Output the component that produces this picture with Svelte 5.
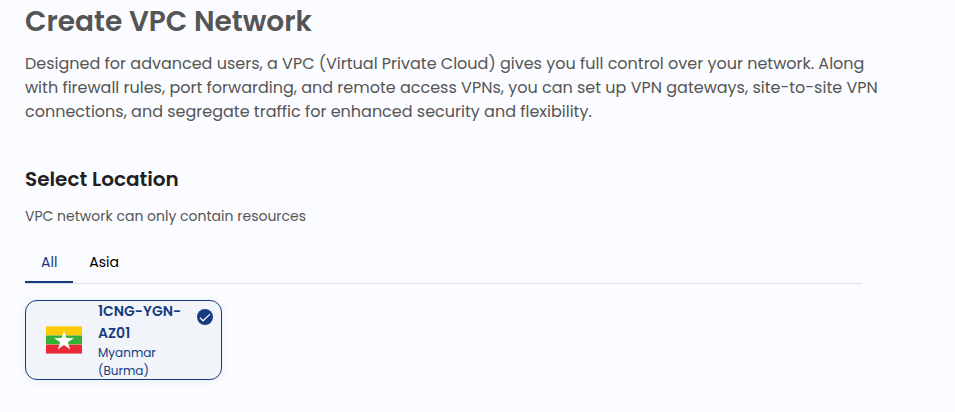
<script>
  const regions = ['All', 'Asia'];
  const locations = [
    { id: 'ygn-az01', name: '1CNG-YGN-AZ01', country: 'Myanmar (Burma)', region: 'Asia' }
  ];
  let region = $state('All');
  let selected = $state('ygn-az01');
  let shown = $derived(locations.filter((l) => region === 'All' || l.region === region));
</script>

<main>
  <h1>Create VPC Network</h1>
  <p class="intro">
    Designed for advanced users, a VPC (Virtual Private Cloud) gives you full control over your network. Along<br />
    with firewall rules, port forwarding, and remote access VPNs, you can set up VPN gateways, site-to-site VPN<br />
    connections, and segregate traffic for enhanced security and flexibility.
  </p>

  <section>
    <h2>Select Location</h2>
    <p class="hint">VPC network can only contain resources</p>

    <div class="tabs" role="tablist">
      {#each regions as r}
        <button
          type="button"
          role="tab"
          class="tab"
          class:active={region === r}
          aria-selected={region === r}
          onclick={() => (region = r)}>{r}</button>
      {/each}
    </div>

    <div class="cards">
      {#each shown as l (l.id)}
        <label class="card" class:selected={selected === l.id}>
          <input type="radio" name="location" value={l.id} bind:group={selected} />
          <svg class="flag" viewBox="0 0 36 28" aria-hidden="true">
            <rect y="0.5" width="36" height="27" fill="#d9cf9a" />
            <rect y="0.5" width="36" height="8.7" fill="#fecb00" />
            <rect y="9.6" width="36" height="8.6" fill="#34b233" />
            <rect y="18.7" width="36" height="8.8" fill="#ea2839" />
            <path
              fill="#fff"
              d="M18 4.6L20.4 11.9H28L21.8 16.3L24.2 23.6L18 19.1L11.8 23.6L14.2 16.3L8 11.9H15.6Z" />
          </svg>
          <span class="text">
            <span class="name">{l.name}</span>
            <span class="country">{l.country}</span>
          </span>
          {#if selected === l.id}
            <svg class="check" viewBox="0 0 16 16" aria-hidden="true">
              <circle cx="8" cy="8" r="8" fill="#173b80" />
              <path d="M3 8.8l3.1 3 6.9-6.7" fill="none" stroke="#fff" stroke-width="1.2" />
            </svg>
          {/if}
        </label>
      {/each}
    </div>
  </section>
</main>

<style>
  :global(body) {
    margin: 0;
    background: #fbfcff;
  }

  main {
    padding: 1px 93px 32px 25px;
    font-family: Poppins, Inter, sans-serif;
    color: #555;
  }

  h1,
  h2,
  p {
    margin: 0;
  }

  h1 {
    font-size: 28px;
    line-height: 42px;
    font-weight: 600;
  }

  .intro {
    margin-top: 9px;
    font-size: 16px;
    line-height: 24px;
    white-space: nowrap;
  }

  section {
    margin-top: 40px;
  }

  h2 {
    font-size: 20px;
    line-height: 30px;
    font-weight: 600;
    color: #212121;
  }

  .hint {
    margin-top: 11px;
    font-size: 14px;
    line-height: 22px;
  }

  .tabs {
    display: flex;
    margin-top: 14px;
    border-bottom: 1px solid #e0e2e6;
  }

  .tab {
    padding: 10px 16px 8px;
    border: 0;
    border-bottom: 2px solid transparent;
    background: none;
    font: inherit;
    font-size: 14px;
    line-height: 22px;
    color: #000;
    cursor: pointer;
  }

  .tab.active {
    border-bottom-color: #173b80;
    color: #173b80;
  }

  .cards {
    display: flex;
    flex-wrap: wrap;
    gap: 16px;
    margin-top: 16px;
  }

  .card {
    position: relative;
    display: flex;
    align-items: center;
    gap: 16px;
    box-sizing: border-box;
    width: 197px;
    height: 80px;
    padding: 0 32px 0 20px;
    border: 1px solid #d5d9e2;
    border-radius: 12px;
    background: #fff;
    box-shadow: 0 1px 10px rgba(0, 0, 0, 0.07);
    color: #173b80;
    cursor: pointer;
  }

  .card.selected {
    border-color: #173b80;
    background: #f1f4f9;
  }

  .card input {
    position: absolute;
    inset: 0;
    margin: 0;
    opacity: 0;
  }

  .flag {
    flex: none;
    width: 36px;
    height: 28px;
  }

  .text {
    flex: 1;
    min-width: 0;
  }

  .name,
  .country {
    display: block;
  }

  .name {
    font-size: 14px;
    line-height: 22px;
    font-weight: 600;
  }

  .country {
    font-size: 12px;
    line-height: 18px;
  }

  .check {
    position: absolute;
    top: 8px;
    right: 8px;
    width: 16px;
    height: 16px;
  }
</style>
